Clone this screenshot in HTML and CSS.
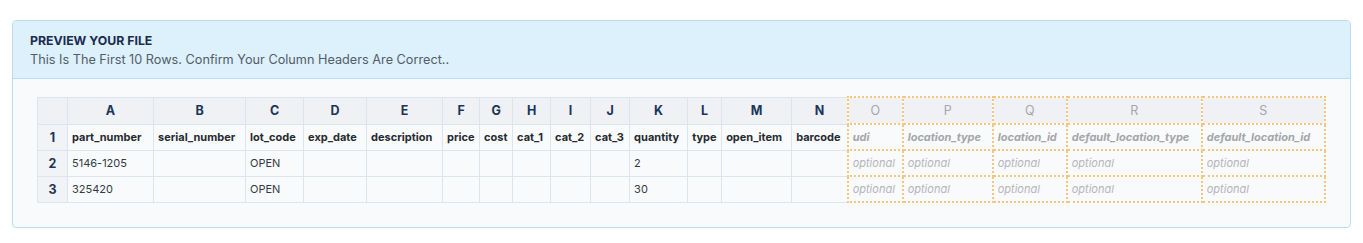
FILE: index.html
```html
<!DOCTYPE html>
<html lang="en">
<head>
  <meta charset="UTF-8" />
  <meta name="viewport" content="width=device-width, initial-scale=1.0"/>
  <title>Preview your file</title>
  <link rel="stylesheet" href="styles.css">
</head>
<body>
  <div class="card">
    <div class="card-head">
      <h2 class="card-title">Preview your file</h2>
      <p class="card-sub">This Is The First 10 Rows. Confirm Your Column Headers Are Correct..</p>
    </div>
    <div class="card-body">
      <table class="sheet">
        <colgroup>
          <col class="w-num">
          <col class="w-a"><col class="w-b"><col class="w-c"><col class="w-d"><col class="w-e">
          <col class="w-f"><col class="w-g"><col class="w-h"><col class="w-i"><col class="w-j">
          <col class="w-k"><col class="w-l"><col class="w-m"><col class="w-n">
          <col class="w-o"><col class="w-p"><col class="w-q"><col class="w-r"><col class="w-s">
        </colgroup>
        <thead>
          <tr>
            <th class="corner"></th>
            <th>A</th><th>B</th><th>C</th><th>D</th><th>E</th>
            <th>F</th><th>G</th><th>H</th><th>I</th><th>J</th>
            <th>K</th><th>L</th><th>M</th><th>N</th>
            <th class="opt">O</th><th class="opt">P</th><th class="opt">Q</th><th class="opt">R</th><th class="opt">S</th>
          </tr>
        </thead>
        <tbody>
          <tr class="names">
            <td class="num">1</td>
            <td>part_number</td><td>serial_number</td><td>lot_code</td><td>exp_date</td><td>description</td>
            <td>price</td><td>cost</td><td>cat_1</td><td>cat_2</td><td>cat_3</td>
            <td>quantity</td><td>type</td><td>open_item</td><td>barcode</td>
            <td class="opt">udi</td><td class="opt">location_type</td><td class="opt">location_id</td><td class="opt">default_location_type</td><td class="opt">default_location_id</td>
          </tr>
          <tr>
            <td class="num">2</td>
            <td>5146-1205</td><td></td><td>OPEN</td><td></td><td></td>
            <td></td><td></td><td></td><td></td><td></td>
            <td>2</td><td></td><td></td><td></td>
            <td class="opt">optional</td><td class="opt">optional</td><td class="opt">optional</td><td class="opt">optional</td><td class="opt">optional</td>
          </tr>
          <tr>
            <td class="num">3</td>
            <td>325420</td><td></td><td>OPEN</td><td></td><td></td>
            <td></td><td></td><td></td><td></td><td></td>
            <td>30</td><td></td><td></td><td></td>
            <td class="opt">optional</td><td class="opt">optional</td><td class="opt">optional</td><td class="opt">optional</td><td class="opt">optional</td>
          </tr>
        </tbody>
      </table>
    </div>
  </div>
</body>
</html>
```

FILE: styles.css
```css
* {
  box-sizing: border-box;
  margin: 0;
  padding: 0;
}

body {
  font-family: Inter, 'Noto Sans', sans-serif;
  background: white;
  color: #333a44;
  padding: 20px 12px 0 12px;
}

.card {
  border: 1px solid #bcdcf2;
  border-radius: 4px;
  overflow: hidden;
  background: #f8fafc;
}

.card-head {
  background: #dcf1fc;
  border-bottom: 1px solid #bcdcf2;
  padding: 12px 17px 0 17px;
  height: 58px;
}

.card-title {
  font-size: 12.3px;
  font-weight: 700;
  text-transform: uppercase;
  color: #1b2d4f;
  line-height: 16px;
}

.card-sub {
  font-size: 12.7px;
  color: #535c68;
  line-height: 22px;
}

.card-body {
  padding: 17px 24px 24px 24px;
}

.sheet {
  border-collapse: collapse;
  table-layout: fixed;
  width: 1289px;
  font-size: 11px;
}

.sheet th,
.sheet td {
  border: 1px solid #dde4ec;
  padding: 0 4px;
  white-space: nowrap;
  overflow: hidden;
  text-align: left;
  vertical-align: middle;
}

.sheet th {
  height: 27px;
  background: #eff1f5;
  text-align: center;
  font-size: 12.5px;
  font-weight: 700;
  color: #1b3559;
}

.sheet td {
  height: 26px;
  background: #f9fafc;
}

.sheet .names td {
  font-weight: 700;
  color: #262a31;
}

.sheet td.num {
  background: #f1f3f6;
  text-align: center;
  font-size: 12.5px;
  font-weight: 700;
  color: #1b3559;
}

.sheet th.opt,
.sheet td.opt {
  border: 2px dotted #f5c77e;
}

.sheet th.opt {
  font-weight: 400;
  color: #a4a7ab;
}

.sheet td.opt {
  font-style: italic;
  color: #b4b6ba;
}

.sheet .names td.opt {
  font-weight: 700;
  color: #a3a6aa;
}

.w-num { width: 30px; }
.w-a { width: 86px; }
.w-b { width: 92px; }
.w-c { width: 58px; }
.w-d { width: 63px; }
.w-e { width: 76px; }
.w-f { width: 37px; }
.w-g { width: 33px; }
.w-h { width: 38px; }
.w-i { width: 40px; }
.w-j { width: 39px; }
.w-k { width: 58px; }
.w-l { width: 34px; }
.w-m { width: 70px; }
.w-n { width: 56px; }
.w-o { width: 55px; }
.w-p { width: 90px; }
.w-q { width: 74px; }
.w-r { width: 135px; }
.w-s { width: 123px; }
```
